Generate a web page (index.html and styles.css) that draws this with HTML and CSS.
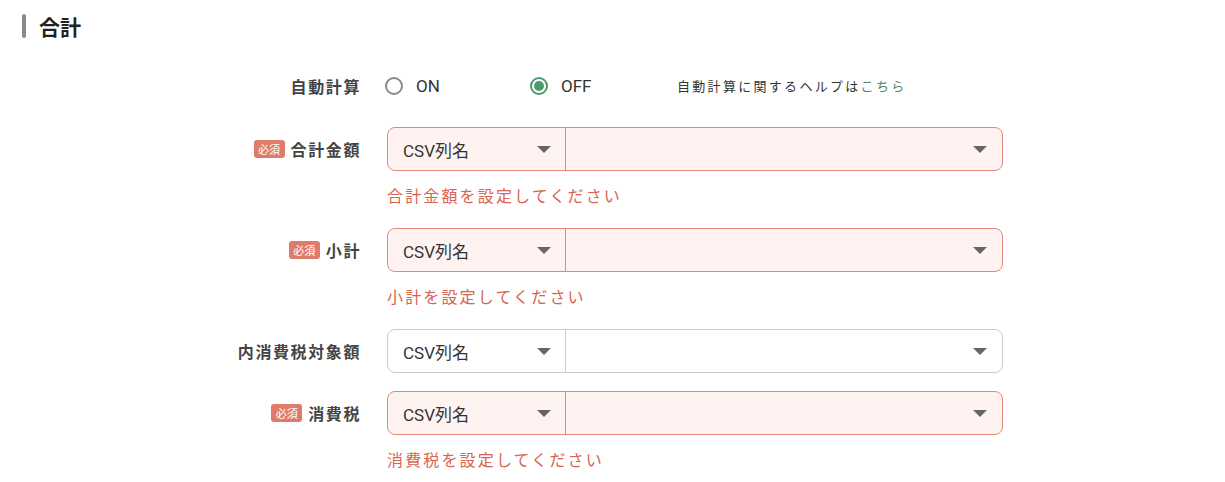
FILE: index.html
```html
<!DOCTYPE html>
<html lang="ja">
<head>
<meta charset="utf-8">
<link rel="stylesheet" href="styles.css">
</head>
<body>
<div class="page">
  <h2 class="section-title"><span class="bar"></span>合計</h2>
  <div class="form">
    <div class="row row-first">
      <div class="label"><span class="label-text">自動計算</span></div>
      <div class="field radios">
        <label class="radio"><span class="circle"></span><span class="radio-text">ON</span></label>
        <label class="radio"><span class="circle checked"></span><span class="radio-text">OFF</span></label>
        <span class="help">自動計算に関するヘルプは<span class="link">こちら</span></span>
      </div>
    </div>

    <div class="row">
      <div class="label"><span class="badge">必須</span><span class="label-text">合計金額</span></div>
      <div class="field">
        <div class="select error">
          <div class="seg seg-left"><span>CSV列名</span><span class="arrow"></span></div>
          <div class="seg seg-right"><span></span><span class="arrow"></span></div>
        </div>
        <div class="err-msg">合計金額を設定してください</div>
      </div>
    </div>

    <div class="row">
      <div class="label"><span class="badge">必須</span><span class="label-text">小計</span></div>
      <div class="field">
        <div class="select error">
          <div class="seg seg-left"><span>CSV列名</span><span class="arrow"></span></div>
          <div class="seg seg-right"><span></span><span class="arrow"></span></div>
        </div>
        <div class="err-msg">小計を設定してください</div>
      </div>
    </div>

    <div class="row">
      <div class="label"><span class="label-text">内消費税対象額</span></div>
      <div class="field">
        <div class="select">
          <div class="seg seg-left"><span>CSV列名</span><span class="arrow"></span></div>
          <div class="seg seg-right"><span></span><span class="arrow"></span></div>
        </div>
      </div>
    </div>

    <div class="row">
      <div class="label"><span class="badge">必須</span><span class="label-text">消費税</span></div>
      <div class="field">
        <div class="select error">
          <div class="seg seg-left"><span>CSV列名</span><span class="arrow"></span></div>
          <div class="seg seg-right"><span></span><span class="arrow"></span></div>
        </div>
        <div class="err-msg">消費税を設定してください</div>
      </div>
    </div>
  </div>
</div>
</body>
</html>
```

FILE: styles.css
```css
* { box-sizing: border-box; }
html, body {
  margin: 0;
  padding: 0;
  background: #fff;
}
body {
  font-family: "Noto Sans CJK JP", "Noto Sans", sans-serif;
  color: #333;
}
.page {
  padding: 14px 0 0 22px;
}
.section-title {
  display: flex;
  align-items: center;
  margin: 0;
  height: 24px;
  font-size: 21px;
  font-weight: 700;
  color: #222;
  gap: 13px;
  line-height: 24px;
}
.bar {
  display: block;
  width: 4px;
  height: 24px;
  border-radius: 2px;
  background: #8a8a8a;
}
.form {
  margin-top: 26px;
  margin-left: -22px;
}
.row {
  display: grid;
  grid-template-columns: 360px 616px;
  column-gap: 27px;
  margin-bottom: 18px;
  align-items: start;
}
.row-first {
  margin-bottom: 19px;
}
.label {
  height: 44px;
  display: flex;
  align-items: center;
  justify-content: flex-end;
  gap: 6px;
}
.label-text {
  font-size: 16px;
  font-weight: 700;
  color: #444;
  letter-spacing: 0.1em;
  margin-right: -1px;
}
.badge {
  display: inline-flex;
  align-items: center;
  justify-content: center;
  width: 31px;
  height: 18px;
  border-radius: 3px;
  background: #e07b6b;
  color: #fff;
  font-size: 11px;
  letter-spacing: 0;
  line-height: 18px;
}
.field {
  display: flex;
  flex-direction: column;
}
.radios {
  height: 44px;
  flex-direction: row;
  align-items: center;
  margin-left: -2px;
}
.radio {
  display: flex;
  align-items: center;
  width: 145px;
}
.circle {
  width: 18px;
  height: 18px;
  border-radius: 50%;
  border: 2px solid #8a8a8a;
  margin-right: 13px;
  position: relative;
}
.circle.checked {
  border-color: #4a9b6c;
}
.circle.checked::after {
  content: "";
  position: absolute;
  left: 2px;
  top: 2px;
  width: 10px;
  height: 10px;
  border-radius: 50%;
  background: #4a9b6c;
}
.radio-text {
  font-size: 17px;
  color: #333;
  font-family: "Roboto", "Noto Sans CJK JP", sans-serif;
}
.help {
  font-size: 13px;
  letter-spacing: 2.3px;
  color: #333;
  margin-left: 2px;
  margin-top: -2px;
}
.link {
  color: #4a8a6a;
}
.select {
  display: flex;
  height: 44px;
  border: 1px solid #cccccc;
  border-radius: 8px;
  background: #fff;
  overflow: hidden;
}
.select.error {
  border-color: #e3887a;
  background: #fff3f2;
}
.seg {
  display: flex;
  align-items: center;
  justify-content: space-between;
  padding: 0 15px 0 15px;
  font-size: 17px;
  font-family: "Roboto", "Noto Sans CJK JP", sans-serif;
  color: #333;
}
.seg-left {
  width: 178px;
  border-right: 1px solid #cccccc;
  padding-right: 14px;
}
.select.error .seg-left {
  border-right-color: #e3887a;
}
.seg-right {
  flex: 1;
}
.arrow {
  width: 0;
  height: 0;
  border-left: 7px solid transparent;
  border-right: 7px solid transparent;
  border-top: 7px solid #666;
}
.err-msg {
  margin-top: 12px;
  margin-bottom: 3px;
  line-height: 24px;
  font-size: 16px;
  letter-spacing: 2.15px;
  color: #d9634f;
}
```
